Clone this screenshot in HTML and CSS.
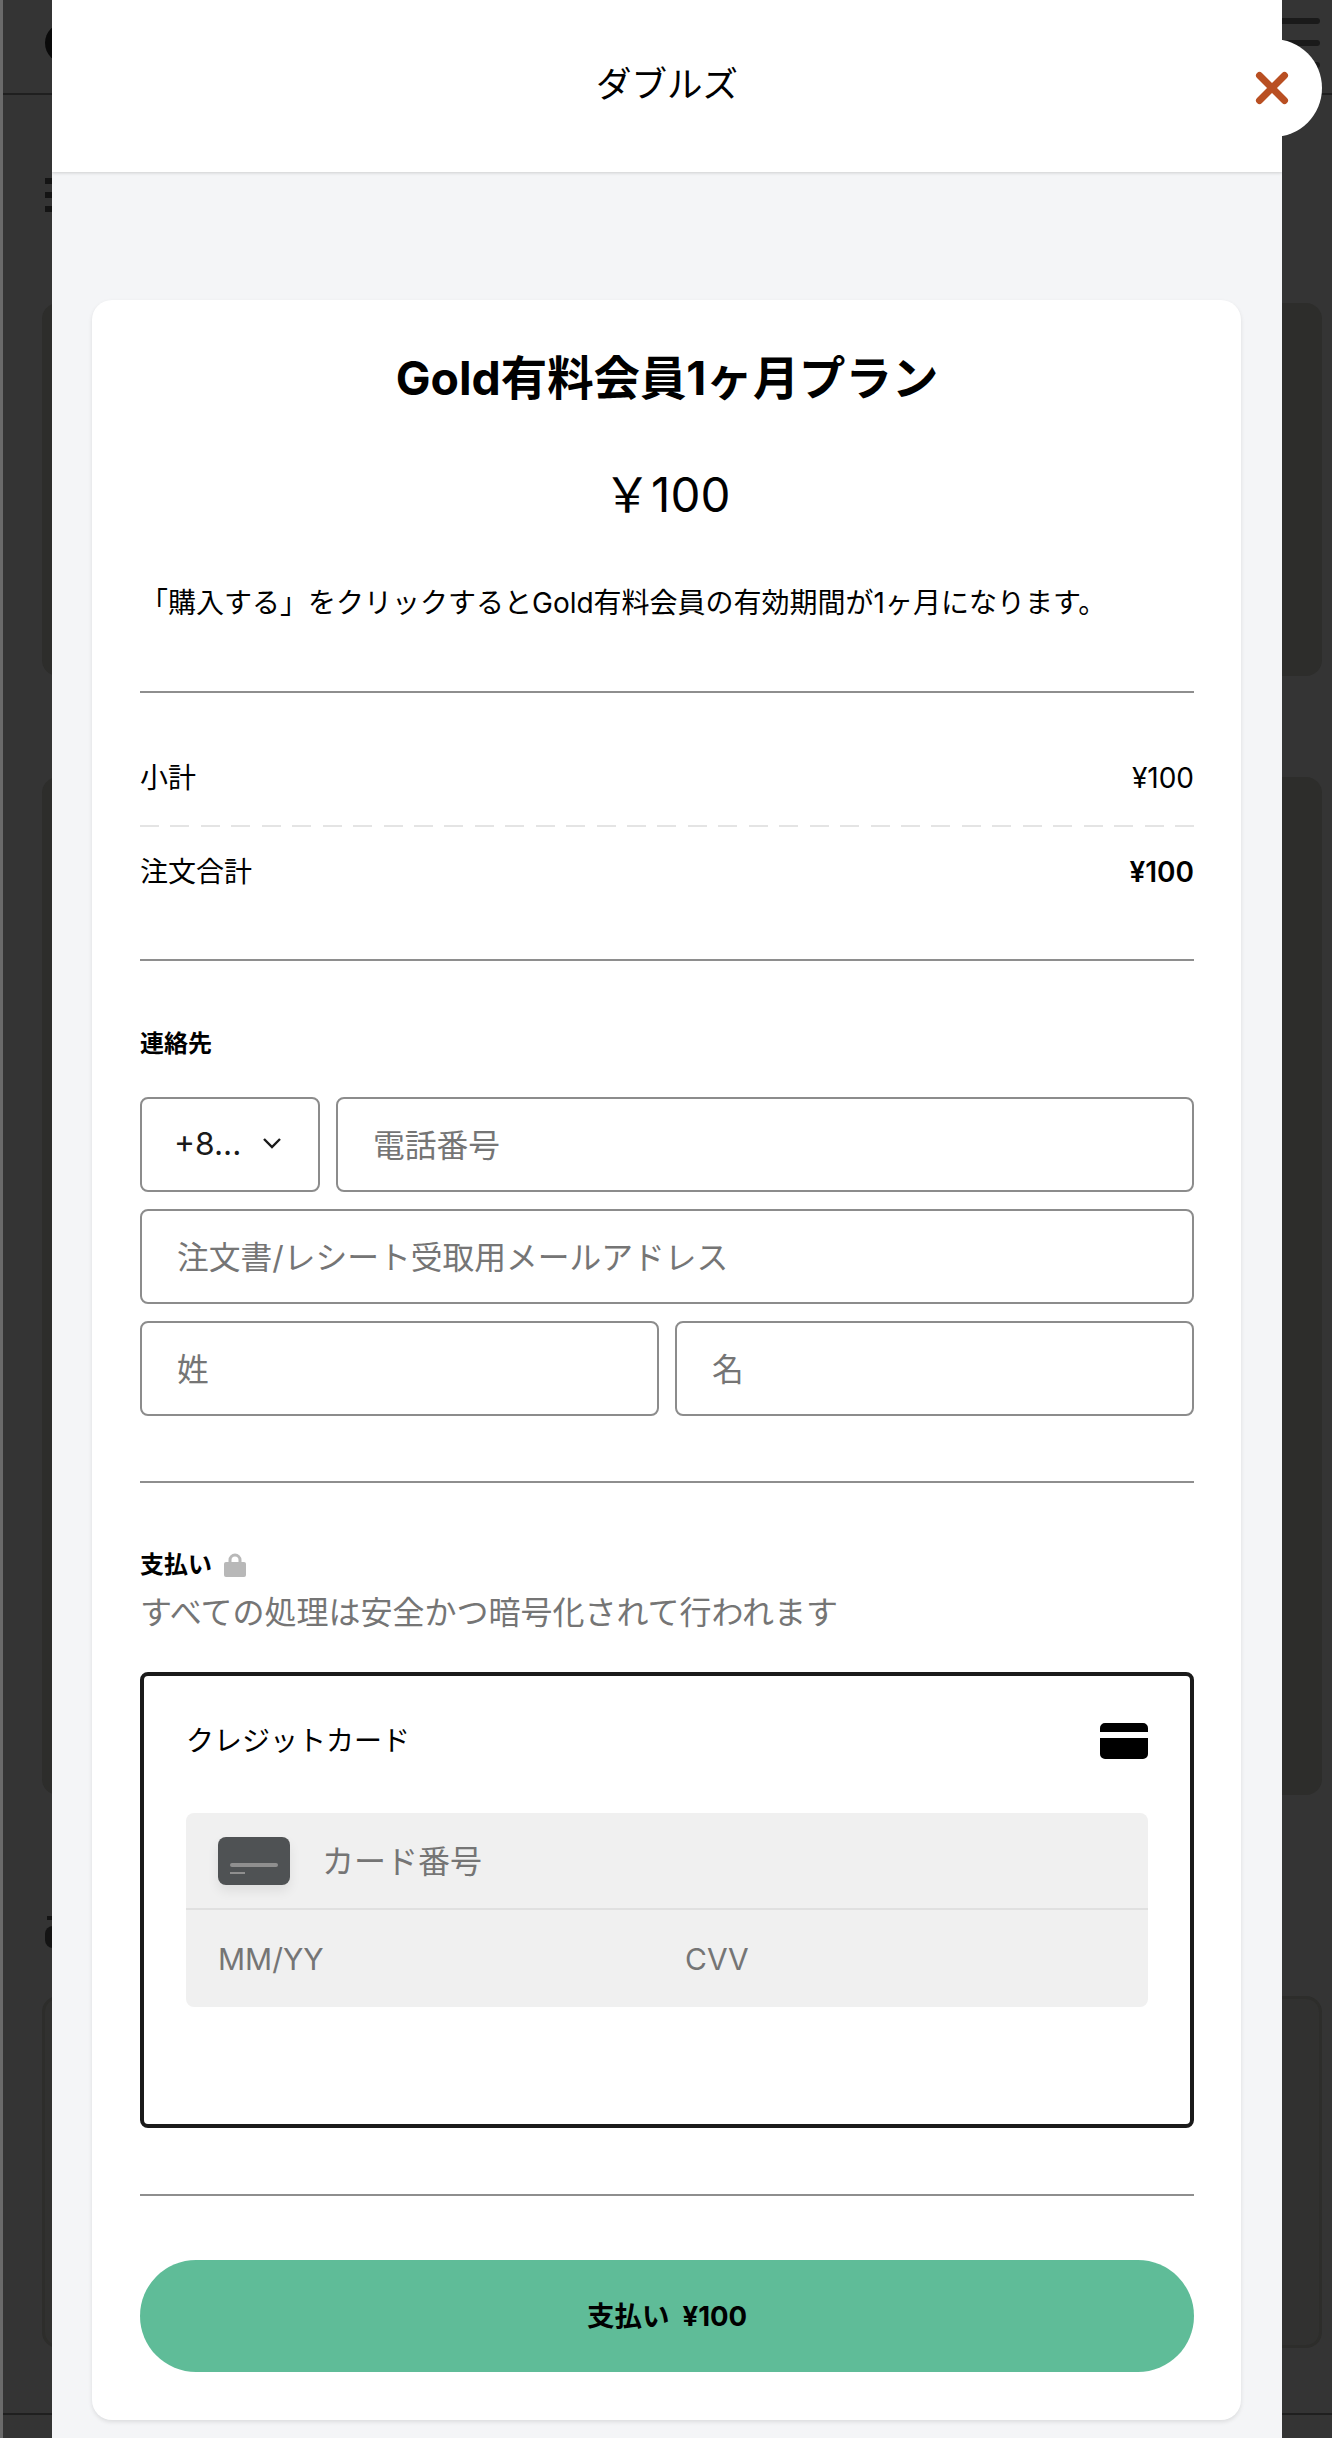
FILE: index.html
```html
<!DOCTYPE html>
<html lang="ja">
<head>
<meta charset="utf-8">
<title>ダブルズ</title>
<link rel="stylesheet" href="styles.css">
</head>
<body>
<div class="backdrop">
  <header class="bg-header">
    <span class="bg-logo"></span>
    <span class="bg-burger"><i></i><i></i><i></i></span>
  </header>
  <div class="bg-title"><i></i><i></i><i></i></div>
  <div class="bg-card bg-card-a"></div>
  <div class="bg-card bg-card-b"></div>
  <div class="bg-title bg-title-b"><i></i><i class="thick"></i></div>
  <div class="bg-card bg-card-c"></div>
  <div class="bg-footer"></div>
</div>

<div class="modal">
  <div class="modal-head">ダブルズ</div>
  <main class="modal-body">
    <section class="card">
      <h1 class="title">Gold有料会員1ヶ月プラン</h1>
      <p class="price">￥100</p>
      <p class="desc">「購入する」をクリックするとGold有料会員の有効期間が1ヶ月になります。</p>
      <hr class="rule rule-desc">
      <div class="sum-row sum-first"><span>小計</span><span class="amount">¥100</span></div>
      <div class="dash"></div>
      <div class="sum-row sum-last"><span>注文合計</span><span class="amount amount-bold">¥100</span></div>
      <hr class="rule rule-total">

      <h2 class="label label-contact">連絡先</h2>
      <div class="fields">
        <div class="field-row">
          <div class="field field-select"><span>+8...</span>
            <svg class="chev" viewBox="0 0 20 12" width="20" height="12"><path d="M2 2l8 8 8-8" fill="none" stroke="#1a1a1a" stroke-width="2.400"/></svg>
          </div>
          <div class="field field-grow">電話番号</div>
        </div>
        <div class="field-row"><div class="field field-grow">注文書/レシート受取用メールアドレス</div></div>
        <div class="field-row">
          <div class="field field-half">姓</div>
          <div class="field field-half">名</div>
        </div>
      </div>
      <hr class="rule rule-fields">

      <h2 class="label label-pay">支払い
        <svg class="lock" viewBox="0 0 22 24" width="22" height="24"><path d="M6 10V7a5 5 0 0 1 10 0v3" fill="none" stroke="#b8b8b8" stroke-width="3"/><rect x="0" y="9" width="22" height="15" rx="2" fill="#b8b8b8"/></svg>
      </h2>
      <p class="secure">すべての処理は安全かつ暗号化されて行われます</p>

      <div class="paybox">
        <div class="paybox-head">
          <span class="paybox-name">クレジットカード</span>
          <svg viewBox="0 0 48 36" width="48" height="36"><path d="M0 9V5a5 5 0 0 1 5-5h38a5 5 0 0 1 5 5v4zM0 15h48v16a5 5 0 0 1-5 5H5a5 5 0 0 1-5-5z" fill="#000"/></svg>
        </div>
        <div class="panel">
          <div class="panel-top">
            <span class="chip"><i class="chip-long"></i><i class="chip-short"></i></span>
            <span class="panel-num">カード番号</span>
          </div>
          <div class="panel-bottom">
            <span class="exp">MM/YY</span>
            <span>CVV</span>
          </div>
        </div>
      </div>
      <hr class="rule rule-box">
      <div class="pay-btn">支払い&nbsp; ¥100</div>
    </section>
  </main>
</div>

<div class="close">
  <svg viewBox="0 0 34 34" width="34" height="34"><path d="M4.500 4.500l25 25M29.500 4.500l-25 25" fill="none" stroke="#b94f22" stroke-width="7" stroke-linecap="round"/></svg>
</div>
</body>
</html>
```
FILE: styles.css
```css
* { box-sizing: border-box; }
html, body { margin: 0; height: 2438px; overflow: hidden; }
body {
  background: #343434;
  font-family: Inter, "Noto Sans CJK JP", "Liberation Sans", sans-serif;
  color: #000;
  position: relative;
}

/* dimmed page behind the modal */
.backdrop {
  height: 2438px;
  border-left: 3px solid #6a6a6a;
  padding-left: 39px;
  padding-right: 10px;
  display: flex;
  flex-direction: column;
}
.bg-header {
  margin-left: -39px;
  margin-right: -10px;
  height: 95px;
  border-bottom: 2px solid #1f1f1f;
  display: flex;
  justify-content: space-between;
  align-items: center;
  padding: 0 12px 7px 42px;
  flex: none;
}
.bg-logo { width: 40px; height: 40px; border-radius: 50%; background: #0a0a0a; }
.bg-burger { display: flex; flex-direction: column; gap: 16px; width: 46px; }
.bg-burger i { height: 6px; background: #1a1a1a; border-radius: 3px; }
.bg-title {
  height: 34px;
  width: 30px;
  margin: 83px 0 0 3px;
  flex: none;
  display: flex;
  flex-direction: column;
  justify-content: space-between;
}
.bg-title i { height: 6px; background: #141414; }
.bg-title-b { margin-top: 121px; height: 32px; }
.bg-title-b i { height: 4px; margin-left: 2px; }
.bg-title-b .thick { height: 22px; margin-left: 0; border-radius: 8px; }
.bg-card { background: #2d2d2b; border-radius: 16px; flex: none; }
.bg-card-a { height: 373px; margin-top: 91px; }
.bg-card-b { height: 1018px; margin-top: 101px; }
.bg-card-c {
  height: 352px;
  margin-top: 48px;
  background: #313130;
  border: 3px solid #2d2d2b;
}
.bg-footer {
  flex: none;
  height: 2px;
  margin: 65px -10px 0 -39px;
  background: #1f1f1f;
}

/* modal */
.modal {
  position: absolute;
  top: 0;
  left: 52px;
  width: 1230px;
  height: 2438px;
  background: #f4f5f7;
  overflow: hidden;
}
.modal-head {
  height: 172px;
  background: #fff;
  box-shadow: 0 1px 3px rgba(0, 0, 0, .16);
  display: flex;
  align-items: center;
  justify-content: center;
  font-size: 35.500px;
  padding-bottom: 10px;
}
.modal-body { padding: 128px 41px 0 40px; }
.card {
  background: #fff;
  border-radius: 20px;
  padding: 50px 47px 48px 48px;
  box-shadow: 0 2px 4px rgba(0, 0, 0, .1);
}
.title {
  margin: 0;
  font-size: 46.400px;
  line-height: 56px;
  font-weight: 700;
  text-align: center;
}
.price {
  margin: 61px 0 0;
  font-size: 47.500px;
  line-height: 56px;
  text-align: center;
}
.desc {
  margin: 60px 0 0;
  font-size: 28px;
  line-height: 40px;
  white-space: nowrap;
}
.rule { border: 0; height: 2px; background: #8e8e8e; margin: 0; }
.rule-desc { margin-top: 68px; }
.rule-total { margin-top: 67px; }
.rule-fields { margin-top: 65px; }
.rule-box { margin-top: 66px; }
.sum-row {
  display: flex;
  justify-content: space-between;
  font-size: 28px;
  line-height: 40px;
}
.sum-first { margin-top: 65px; }
.sum-last { margin-top: 25px; }
.amount-bold { font-weight: 600; }
.dash {
  height: 2px;
  margin-top: 27px;
  background: repeating-linear-gradient(90deg, #e4e4e4 0 19px, transparent 19px 30.440px);
}
.label { margin: 0; font-size: 24px; line-height: 32px; font-weight: 700; }
.label-contact { margin-top: 67px; }
.label-pay { margin-top: 66px; display: flex; align-items: center; gap: 12px; }
.fields { margin-top: 37px; display: flex; flex-direction: column; gap: 17px; }
.field-row { display: flex; gap: 16px; }
.field {
  height: 95px;
  border: 2px solid #8c8c8c;
  border-radius: 8px;
  display: flex;
  align-items: center;
  padding: 0 35px 4px;
  font-size: 31.750px;
  color: #757575;
  white-space: nowrap;
}
.field-grow { flex: 1; }
.field-half { flex: 1 1 0; }
.field-select {
  width: 180px;
  flex: none;
  justify-content: space-between;
  color: #1a1a1a;
  padding: 0 36px 3px 32px;
}
.lock { display: block; }
.secure { margin: 10px 0 0; font-size: 32px; line-height: 44px; color: #757575; }
.paybox {
  margin-top: 37px;
  height: 456px;
  border: 4px solid #1a1a1a;
  border-radius: 8px;
  padding: 47px 42px 0;
}
.paybox-head {
  display: flex;
  justify-content: space-between;
  align-items: center;
  font-size: 28px;
  height: 36px;
}
.paybox-name { padding-bottom: 5px; }
.panel {
  margin-top: 54px;
  background: #f0f0f0;
  border-radius: 8px;
  font-size: 30px;
  color: #757575;
}
.panel-top {
  height: 97px;
  border-bottom: 2px solid #e0e0e0;
  display: flex;
  align-items: center;
  gap: 32px;
  padding-left: 32px;
}
.panel-num { font-size: 32px; padding-bottom: 4px; }
.panel-bottom { height: 97px; display: flex; align-items: center; padding-left: 32px; }
.exp { width: 467px; }
.chip {
  width: 72px;
  height: 48px;
  border-radius: 8px;
  background: #4f5254;
  box-shadow: 0 6px 12px rgba(0, 0, 0, .08);
  display: flex;
  flex-direction: column;
  align-items: flex-start;
  justify-content: flex-end;
  padding: 0 12px 11px;
  gap: 5px;
}
.chip-long { width: 48px; height: 4px; background: #8f8f8f; border-radius: 2px; }
.chip-short { width: 15px; height: 2px; background: #8f8f8f; }
.pay-btn {
  margin-top: 64px;
  height: 112px;
  border-radius: 56px;
  background: #5fbc98;
  display: flex;
  align-items: center;
  justify-content: center;
  font-size: 27.500px;
  font-weight: 700;
  white-space: pre;
  padding-bottom: 4px;
}
.close {
  position: absolute;
  left: 1224px;
  top: 39px;
  width: 98px;
  height: 98px;
  border-radius: 50%;
  background: #fff;
  display: flex;
  align-items: center;
  justify-content: center;
  padding-right: 3px;
}
```
